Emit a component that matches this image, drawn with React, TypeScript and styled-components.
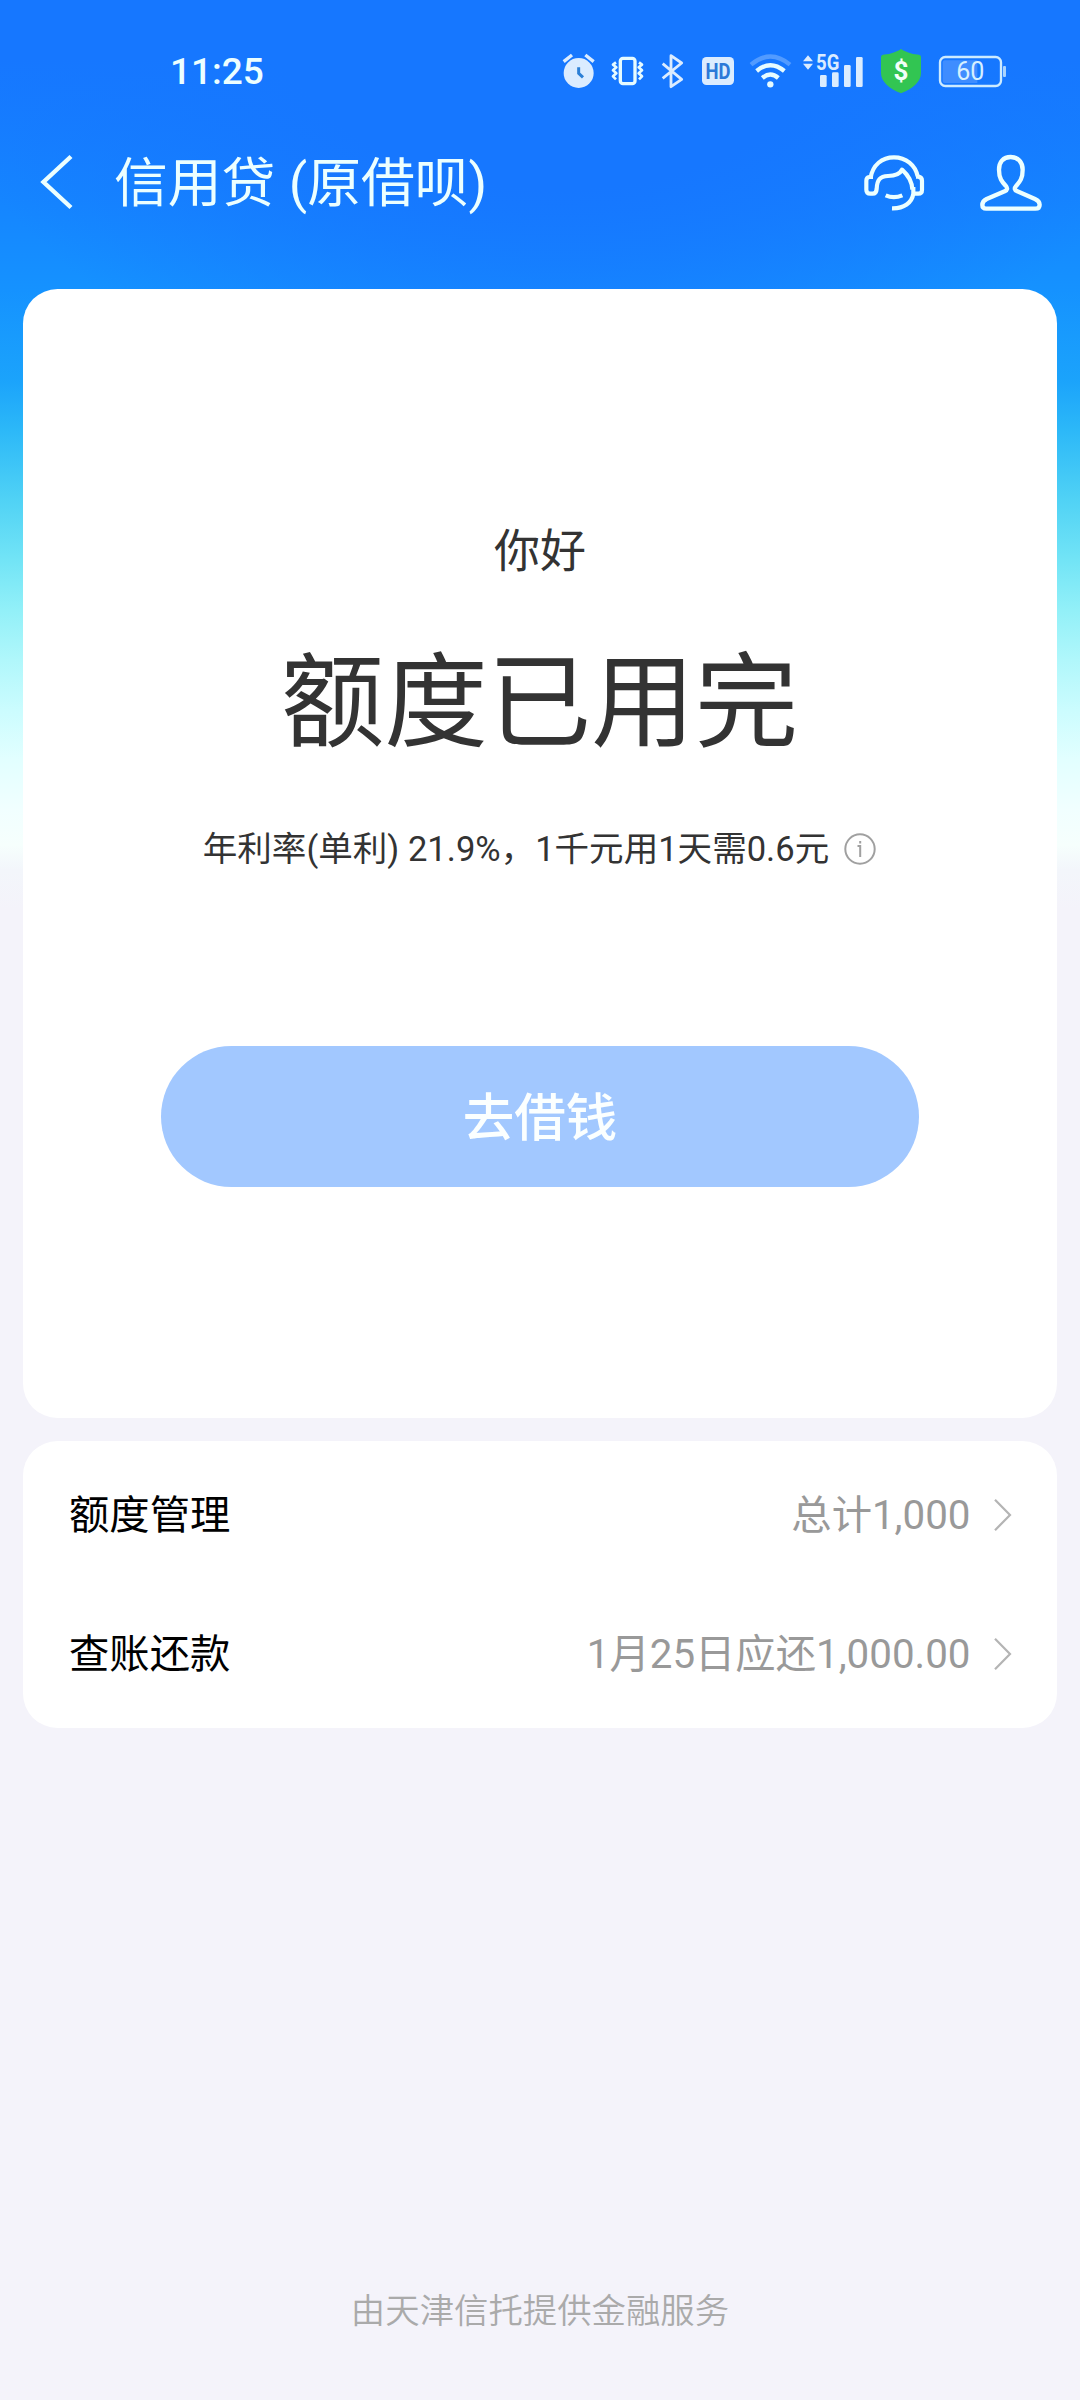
import React from 'react';
import styled, { createGlobalStyle } from 'styled-components';

const Global = createGlobalStyle`
  html, body { margin: 0; padding: 0; background: #f4f3fa; }
  *, *::before, *::after { box-sizing: border-box; }
`;

const Page = styled.div`
  width: 1080px;
  height: 2400px;
  display: flex;
  flex-direction: column;
  overflow: hidden;
  font-family: Roboto, 'Noto Sans CJK SC', sans-serif;
  background:
    radial-gradient(ellipse 640px 420px at 560px 0, #1677ff 45%, rgba(22, 119, 255, 0) 100%) no-repeat 0 0 / 1080px 420px,
    linear-gradient(
      180deg,
      #1677ff 0, #1677ff 60px, #1585ff 200px, #1592ff 290px, #1ba3fb 380px,
      #2cb8f8 430px, #50d2f5 500px, #72e4f6 560px, #92f0f8 610px,
      #b0f7fb 660px, #cbfcfe 710px, #e2ffff 760px, #f1ffff 810px,
      #f6fffd 845px, #f3f6fb 870px, #f4f3fa 910px, #f4f3fa 100%
    );
`;

const StatusBar = styled.header`
  height: 142px;
  padding: 0 74px 0 170px;
  display: flex;
  align-items: center;
  justify-content: space-between;
  flex: none;
`;

const Clock = styled.time`
  color: #ecffff;
  font-size: 37px;
  font-weight: 500;
  line-height: 1;
`;

const StatusIcons = styled.div`
  display: flex;
  align-items: center;
`;

const Glyph = styled.svg<{ $gap?: number }>`
  display: block;
  flex: none;
  overflow: visible;
  margin-right: ${(p) => p.$gap ?? 0}px;
`;

const NavBar = styled.nav`
  height: 146.5px;
  padding: 13px 38px 0 41px;
  display: flex;
  align-items: flex-start;
  flex: none;
`;

const Title = styled.h1`
  margin: -7px auto 0 42px;
  color: #ecffff;
  font-size: 53.8px;
  font-weight: 400;
  line-height: 72px;
`;

const Content = styled.main`
  flex: 1;
  padding: 0 23px;
  display: flex;
  flex-direction: column;
  gap: 23px;
`;

const Card = styled.section`
  background: #fff;
  border-radius: 34.5px;
`;

const LimitCard = styled(Card)`
  height: 1129px;
  padding-top: 227.5px;
  display: flex;
  flex-direction: column;
  align-items: center;
  color: #333;
`;

const Greeting = styled.p`
  margin: 0;
  font-size: 46px;
  line-height: 70px;
`;

const Headline = styled.h2`
  margin: 48px 1px 0 0;
  font-size: 103.5px;
  font-weight: 400;
  line-height: 140px;
`;

const Rate = styled.div`
  margin: 50px 1px 0 0;
  display: flex;
  align-items: center;
  gap: 15px;
  font-size: 34.56px;
  line-height: 50px;
`;

const BorrowButton = styled.button`
  margin: 172px 0 0;
  padding: 0 0 6px;
  width: 758px;
  height: 141px;
  border: 0;
  border-radius: 70.5px;
  background: #a2c8ff;
  color: #fbffff;
  font: 500 51.5px Roboto, 'Noto Sans CJK SC', sans-serif;
`;

const ListCard = styled(Card)`
  padding: 5.8px 46px;
`;

const Row = styled.div`
  height: 138.2px;
  display: flex;
  align-items: center;
  font-size: 40.32px;
`;

const RowLabel = styled.span`
  color: #000;
  margin-right: auto;
  padding-bottom: 7px;
`;

const RowValue = styled.span`
  color: #999;
  margin-right: 23.5px;
  padding-bottom: 7px;
`;

const Footer = styled.footer`
  padding-bottom: 64px;
  text-align: center;
  color: #aaa;
  font-size: 34.4px;
  font-weight: 350;
  line-height: 50px;
`;

const PALE = '#dbecff';

const AlarmIcon = () => (
  <Glyph $gap={17} width="32" height="34" viewBox="70 72 96 102">
    <circle cx="117" cy="129" r="45" fill={PALE} />
    <path d="M72 95 97 75M137 75 162 95" stroke={PALE} strokeWidth="10" />
    <path d="M117 112V130L130 142" fill="none" stroke="#2b7fd6" strokeWidth="9" />
  </Glyph>
);

const VibrateIcon = () => (
  <Glyph $gap={19} width="31" height="34" viewBox="216 72 93 102" fill="none" stroke="#e6fbff">
    <rect x="241" y="85" width="44" height="76" rx="8" strokeWidth="10" />
    <path d="M228 97 219 104 229 112 219 121 229 130 219 139 228 148M297 97 306 104 296 112 306 121 296 130 306 139 297 148" strokeWidth="8" strokeLinejoin="round" />
  </Glyph>
);

const BluetoothIcon = () => (
  <Glyph $gap={19} width="21" height="34" viewBox="366 72 63 102" fill="none" stroke={PALE} strokeWidth="8.5">
    <path d="M368 101 425 148 393 170V77L425 99 368 145" strokeLinejoin="round" />
  </Glyph>
);

const HdIcon = () => (
  <Glyph $gap={16} width="32" height="28" viewBox="0 0 32 28">
    <rect width="32" height="28" rx="4.5" fill={PALE} />
    <text x="16" y="22" textAnchor="middle" textLength="25" lengthAdjust="spacingAndGlyphs" fontFamily="Roboto, sans-serif" fontWeight="700" fontSize="22.5" fill="#2b79d8">HD</text>
  </Glyph>
);

const WifiIcon = () => (
  <Glyph $gap={12} width="41" height="34" viewBox="630 70 123 102" fill="none" strokeWidth="13">
    <path d="M633 102Q691 53 750 102" stroke="#529bff" />
    <path d="M650 121Q691 86 733 121" stroke="#e6fbff" />
    <path d="M667 142Q691 121 715 142" stroke="#e6fbff" />
    <circle cx="691" cy="161" r="9.5" fill="#e6fbff" />
  </Glyph>
);

const SignalIcon = () => (
  <Glyph $gap={18} width="60" height="34" viewBox="40 69 180 102" fill={PALE}>
    <path d="M40 91 55 73 70 91ZM40 98 55 116 70 98Z" />
    <text x="79" y="117" textLength="70" lengthAdjust="spacingAndGlyphs" fontFamily="Roboto, sans-serif" fontWeight="700" fontSize="64">5G</text>
    <rect x="91" y="132" width="20" height="36" rx="4" />
    <rect x="127" y="124" width="20" height="44" rx="4" />
    <rect x="163" y="102" width="20" height="66" rx="4" />
    <rect x="199" y="78" width="20" height="90" rx="4" />
  </Glyph>
);

const ShieldIcon = () => (
  <Glyph $gap={18} width="40" height="44" viewBox="273 54 120 132">
    <path d="M333 54C352 66 373 71 387 71Q393 72 393 78V126C393 152 368 173 333 187C298 173 273 152 273 126V78Q273 72 279 71C293 71 314 66 333 54Z" fill="#32c552" />
    <text x="333" y="146" textAnchor="middle" fontFamily="Roboto, sans-serif" fontWeight="700" fontSize="78" fill="#f2fff8">$</text>
  </Glyph>
);

const BatteryIcon = () => (
  <Glyph width="67" height="31" viewBox="447 75 201 93">
    <path d="M464 88H562V156H464Q458 156 458 150V94Q458 88 464 88Z" fill="#3f8dff" />
    <rect x="450" y="78" width="183" height="87" rx="16" fill="none" stroke="#cdebff" strokeWidth="7" />
    <rect x="639" y="105" width="9" height="33" rx="3" fill="#a9d4ff" />
    <text x="541" y="148" textAnchor="middle" fontFamily="Roboto, sans-serif" fontWeight="400" fontSize="75" fill="#d6f0ff">60</text>
  </Glyph>
);

const BackIcon = () => (
  <Glyph width="31" height="54" viewBox="0 0 31 54" fill="none" stroke="#ecffff" strokeWidth="4.4">
    <path d="M30 1.5 2.5 27 30 52.5" />
  </Glyph>
);

const ServiceIcon = () => (
  <Glyph $gap={56} width="60" height="56" viewBox="132 74 180 168" fill="none" stroke="#ecffff" strokeWidth="12.5" strokeLinejoin="round">
    <path d="M152 142C158 104 186 81 222 81C258 81 286 104 293 138" />
    <path d="M159 140H148Q139 141 139 151V178Q139 190 151 190H158Q169 190 170 176C171 148 180 138 204 137C226 137 240 131 246 118C262 132 276 150 277 178" />
    <path d="M288 139H295Q306 141 306 151V179Q306 190 295 190H280" />
    <path d="M197 195Q221 206 247 195M280 170V190C276 217 252 235 216 234" />
  </Glyph>
);

const UserIcon = () => (
  <Glyph width="62" height="56" viewBox="480 74 186 168" fill="none" stroke="#ecffff" strokeWidth="13" strokeLinejoin="round">
    <path d="M572 80C550 80 537 95 537 118C537 144 546 154 557 166C564 174 562 179 554 183L500 206C490 211 487 216 487 224C487 232 491 235 499 235H646C655 235 659 231 659 223C659 215 654 210 645 206L592 183C583 179 582 174 589 166C600 154 608 144 608 118C608 95 594 80 572 80Z" />
  </Glyph>
);

const InfoIcon = () => (
  <Glyph width="32" height="32" viewBox="0 0 32 32" fill="none" stroke="#a0a0a0" strokeWidth="2">
    <circle cx="16" cy="16" r="14.7" />
    <path d="M13.5 13H16.2V24M16.2 8V10.6" />
  </Glyph>
);

const Chevron = () => (
  <Glyph width="17" height="32" viewBox="0 0 17 32" fill="none" stroke="#b4b4b4" strokeWidth="2.2">
    <path d="M1 .8 16 16 1 31.2" />
  </Glyph>
);

const rows = [
  { label: '额度管理', value: '总计1,000' },
  { label: '查账还款', value: '1月25日应还1,000.00' },
];

export default function App() {
  return (
    <>
      <Global />
      <Page>
        <StatusBar>
          <Clock>11:25</Clock>
          <StatusIcons>
            <AlarmIcon />
            <VibrateIcon />
            <BluetoothIcon />
            <HdIcon />
            <WifiIcon />
            <SignalIcon />
            <ShieldIcon />
            <BatteryIcon />
          </StatusIcons>
        </StatusBar>
        <NavBar>
          <BackIcon />
          <Title>信用贷 (原借呗)</Title>
          <ServiceIcon />
          <UserIcon />
        </NavBar>
        <Content>
          <LimitCard>
            <Greeting>你好</Greeting>
            <Headline>额度已用完</Headline>
            <Rate>
              <span>年利率(单利) 21.9%，1千元用1天需0.6元</span>
              <InfoIcon />
            </Rate>
            <BorrowButton>去借钱</BorrowButton>
          </LimitCard>
          <ListCard>
            {rows.map((r) => (
              <Row key={r.label}>
                <RowLabel>{r.label}</RowLabel>
                <RowValue>{r.value}</RowValue>
                <Chevron />
              </Row>
            ))}
          </ListCard>
        </Content>
        <Footer>由天津信托提供金融服务</Footer>
      </Page>
    </>
  );
}
